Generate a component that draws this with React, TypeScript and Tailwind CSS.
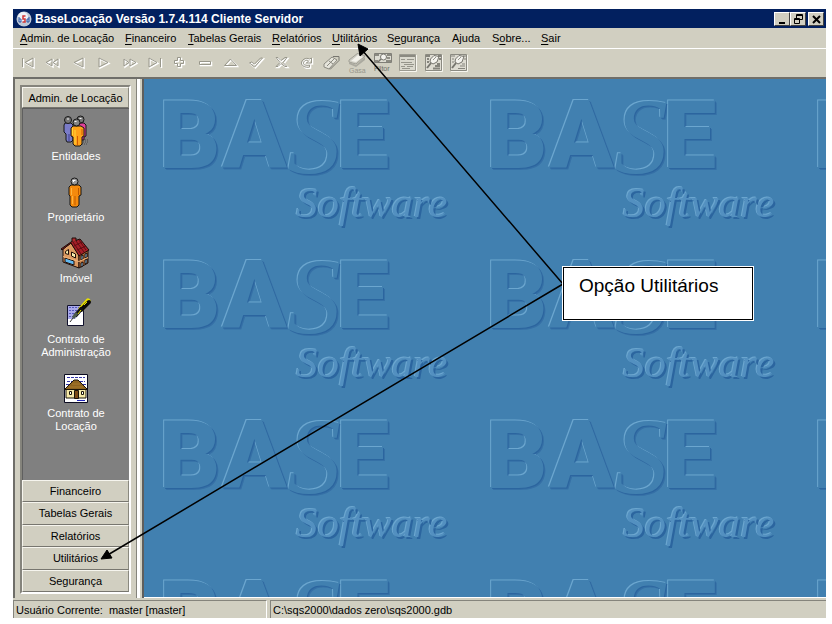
import type { ReactNode } from "react";

const menuItems = [
  { before: "", key: "A", after: "dmin. de Locação" },
  { before: "", key: "F", after: "inanceiro" },
  { before: "", key: "T", after: "abelas Gerais" },
  { before: "", key: "R", after: "elatórios" },
  { before: "", key: "U", after: "tilitários" },
  { before: "S", key: "e", after: "gurança" },
  { before: "A", key: "j", after: "uda" },
  { before: "S", key: "o", after: "bre..." },
  { before: "", key: "S", after: "air" },
];

const toolPaths = [
  { label: "Primeiro", d: "M4.5 5v9M15 5v9L7 9.5Z" },
  { label: "Retroceder", d: "M9 6v7L3 9.5ZM15 6v7L10 9.5Z" },
  { label: "Anterior", d: "M14 5v9L5 9.5Z" },
  { label: "Próximo", d: "M5 5v9L14 9.5Z" },
  { label: "Avançar", d: "M4 6v7L9 9.5ZM10 6v7L16 9.5Z" },
  { label: "Último", d: "M15.5 5v9M4 5v9L12 9.5Z" },
  { label: "Inserir", d: "M7.5 4.5h3v3h3v3h-3v3h-3v-3h-3v-3h3Z" },
  { label: "Excluir", d: "M3.5 8.5h11v3h-11Z" },
  { label: "Editar", d: "M9.5 6L15.5 12.5H3.5Z" },
  { label: "Gravar", d: "M2.5 10l2-1 3 2 6-6 2 0-8 9Z" },
  { label: "Cancelar", d: "M4 4.5h2l3 3 4-3h2l-4 5 4 4h-2l-4-3-3 3h-2l4-4Z" },
  { label: "Atualizar", d: "M14.5 5v5h-5l2-2c-2-2-5 0-5 2s3 3 6 2v2c-4 1-8-1-8-4s4-6 8-4Z" },
];

function Embossed({ d }: { d: string }) {
  return (
    <svg className="w-[18px] h-[18px]" viewBox="0 1 18 18" fill="none">
      <path d={d} stroke="#ffffff" strokeWidth="1.5" transform="translate(1 1)" />
      <path d={d} stroke="#98978b" />
    </svg>
  );
}

function TagIcon() {
  return (
    <svg className="w-[18px] h-[18px]" viewBox="0 0 18 18" fill="none" stroke="#8b8a81">
      <path d="M1 10L9 3l5 3-8 9-5-2Z" fill="#e6e5dc" />
      <path d="M4 12l7-7M6 7l4 3" />
      <path d="M10 2.5h6v4l-9 9" stroke="#77766f" />
    </svg>
  );
}

function CleanIcon() {
  return (
    <svg className="w-[18px] h-5" viewBox="0 0 18 20" fill="none">
      <path d="M1 7L10 0l7 3-9 8-7-2Z" fill="#cfcec4" stroke="#a09f95" />
      <path d="M3 8l7-6 5 2-7 5Z" fill="#f2f1ea" />
      <path d="M1 9l7 3 9-8v3l-9 7-7-3Z" fill="#aaa99f" />
      <text x="1" y="20" fontSize="7" fill="#96958b" fontFamily="Liberation Sans, sans-serif">Gasa</text>
    </svg>
  );
}

function FilterIcon() {
  return (
    <svg className="w-[18px] h-5" viewBox="0 0 18 20" fill="none">
      <path d="M.5.5h17v9H.5Z" fill="#dddcd2" stroke="#807f78" />
      <path d="M1 1h4v2H1zM13 1h4v2h-4zM1 7h3v2H1zM12 7h5v2h-5z" fill="#8b8a81" />
      <circle cx="9.5" cy="4" r="3" fill="#f4f3ee" stroke="#77766f" />
      <path d="M7 6l-3 3M13 5h3" stroke="#77766f" strokeWidth="1.5" />
      <text x="0" y="18" fontSize="7" fill="#6d6c66" fontFamily="Liberation Sans, sans-serif">Filtor</text>
    </svg>
  );
}

function ListIcon() {
  return (
    <svg className="w-[18px] h-[18px]" viewBox="0 0 18 18" fill="none">
      <path d="M.5.5h16v16H.5Z" fill="#dad9ce" stroke="#9c9b91" />
      <path d="M1 2h15" stroke="#8b8a81" strokeWidth="2" />
      <path d="M2 5.5h4M8 5.5h7M2 8.5h11M5 10.5h10M2 12.5h4M8 12.5h6M3 14.5h8" stroke="#96958b" />
      <path d="M1 17.5h16.5V1" stroke="#f7f6ef" />
    </svg>
  );
}

function SearchSheetIcon({ dark }: { dark?: boolean }) {
  return (
    <svg className="w-[18px] h-[18px]" viewBox="0 0 18 18" fill="none">
      <path d="M.5.5h16v16H.5Z" fill="#dedcd2" stroke="#8b8a81" />
      <path d="M1 2h4M13 2h3M2 5h2M2 8h2M12 10h3M10 12h5M8 14.5h7M14 5h2" stroke="#85847c" strokeWidth={dark ? 2 : 1} />
      <path d="M5.5 5L9 1.5l5 1L12 8l-4 2-3-2Z" fill="#f4f3ee" stroke="#77766f" />
      <path d="M8 6l3-3" stroke="#96958b" />
      <path d="M6 9l-4 5" stroke="#77766f" strokeWidth="2" />
      <path d="M1 17.5h16.5V1" stroke="#f7f6ef" />
    </svg>
  );
}

function PeopleIcon() {
  return (
    <svg className="w-8 h-8" viewBox="0 0 32 32" stroke="#161616">
      <path d="M23 27h6M22 29h5M25 25h3" stroke="#4a4a4a" strokeDasharray="1 1" />
      <path d="M18 9l2-1h4l2 2v11l-2 1v3h-5Z" fill="#e0409a" />
      <path d="M5 8h6l2 2v15l-2 2H7l-1-2v-6l-2-2v-7Z" fill="#7a7cc8" />
      <path d="M9 19v7" stroke="#3c3f8a" />
      <circle cx="8" cy="5" r="3.5" fill="#777" />
      <circle cx="20.5" cy="4.5" r="3.5" fill="#777" />
      <path d="M13 11h8l3 2v8l-2 1v7l-2 2h-5l-2-2v-7l-2-1v-8Z" fill="#ffa21a" />
      <path d="M12.5 13v7M15 15v14" stroke="#ffd839" />
      <path d="M17.5 21v9M22 14v6" stroke="#d45b00" />
      <circle cx="16.5" cy="7.5" r="3.5" fill="#858585" />
      <path d="M14.5 6.5h2M7 4h2M19.5 3.5h2" stroke="#f4f4f4" />
    </svg>
  );
}

function OwnerIcon() {
  return (
    <svg className="w-8 h-8" viewBox="0 0 32 32" stroke="#161616">
      <path d="M11 9h8l2 2v8l-2 1v9l-2 2h-5l-2-2v-9l-1-1v-8Z" fill="#f58a0c" />
      <path d="M11.5 12v7M12.5 20v8" stroke="#ffb43c" />
      <path d="M15 20v9M18.5 12v7" stroke="#bf5a00" />
      <circle cx="14.5" cy="5.5" r="3.5" fill="#9a9a9a" />
      <path d="M12.5 4.5h3M13 5.5h1" stroke="#fff" />
    </svg>
  );
}

function HouseIcon() {
  return (
    <svg className="w-8 h-8" viewBox="0 0 32 32" stroke="#1c0d08">
      <path d="M3 12l8-6 8 12v13L3 25Z" fill="#dc9a62" />
      <path d="M19 18l9-5v13l-9 5Z" fill="#b87440" />
      <path d="M11 5l9-3 9 11-10 6-8-13-9 7-1-1Z" fill="#a51f28" />
      <path d="M13 5l8 12M16 4l8 11M19 3l7 10M14 9l8-4M17 13l9-4" stroke="#5f0d13" />
      <path d="M12 5V1h4v3" fill="#b12c30" />
      <path d="M5.5 14.5l3-2v5l-3-1ZM11.5 15l4 2v4l-4-2Z" fill="#f8eeb0" />
      <path d="M5 21l9 3v4l-9-3Z" fill="#62b8ef" />
      <path d="M21 19l2-1v4l-2 1ZM25 17l2-1v4l-2 1ZM21 26l2-1v4l-2 1ZM25 23l2-1v4l-2 1Z" fill="#8cc7ec" />
      <path d="M3 19.5l16 5 9-4" fill="none" stroke="#f0b479" />
    </svg>
  );
}

function PenContractIcon() {
  return (
    <svg className="w-8 h-8" viewBox="0 0 32 32" fill="none">
      <path d="M7.5 7.5h16v20h-16Z" fill="#fff" stroke="#10102c" />
      <path d="M8 8h15v4l-8 9H8z" fill="#a9a9e8" />
      <path d="M9 9.5h13M9 12.5h10M9 15.5h8M9 18.5h5" stroke="#5557b9" strokeDasharray="2 1" />
      <path d="M28 3l-7 8" stroke="#e8e000" strokeWidth="5" strokeLinecap="round" />
      <path d="M29 4l-8 8" stroke="#080808" strokeWidth="4" strokeLinecap="round" />
      <path d="M22 10l-7 8" stroke="#111" strokeWidth="4" />
      <path d="M17 15l-4 5" stroke="#4d5b4d" strokeWidth="3" />
      <path d="M27 4l-3 3M18 16l3-4" stroke="#e8e000" />
      <path d="M13 20l-3 4" stroke="#333" />
    </svg>
  );
}

function HouseContractIcon() {
  return (
    <svg className="w-8 h-8" viewBox="0 0 32 32" fill="none">
      <path d="M4.5 2.5h23v28h-23Z" fill="#fff" stroke="#0b0b20" />
      <path d="M7 5.5h18M7 9.5h5M20 9.5h5M6 12.5h3M23 12.5h3" stroke="#3437a8" strokeDasharray="3 1" />
      <path d="M6 16h20v10H6Z" fill="#f5e9a8" stroke="#1a1408" />
      <path d="M4.5 17.5L14 8h4l9.5 9.5Z" fill="#8e6420" stroke="#1a1408" />
      <path d="M9 15h14M12 12h8" stroke="#a87a2b" />
      <path d="M14.5 18.5h4v8h-4Z" fill="#7b4a15" stroke="#1a1408" />
      <path d="M9.5 19.5h2v3h-2ZM21.5 19.5h2v3h-2Z" fill="#fff" stroke="#1a1408" />
      <path d="M17 28.5h8" stroke="#2024b8" />
    </svg>
  );
}

const shortcuts: { label: string; icon: ReactNode }[] = [
  { label: "Entidades", icon: <PeopleIcon /> },
  { label: "Proprietário", icon: <OwnerIcon /> },
  { label: "Imóvel", icon: <HouseIcon /> },
  { label: "Contrato de Administração", icon: <PenContractIcon /> },
  { label: "Contrato de Locação", icon: <HouseContractIcon /> },
];

const groups = ["Financeiro", "Tabelas Gerais", "Relatórios", "Utilitários", "Segurança"];

function Initials() {
  return (
    <>
      <g fontFamily="Roboto, sans-serif" fontWeight="900" fontSize="95">
        <text x="15" y="89">B</text>
        <text x="78" y="89">A</text>
        <text x="192" y="89">E</text>
      </g>
      <text x="143" y="94" fontFamily="Liberation Serif, serif" fontStyle="italic" fontSize="108">S</text>
    </>
  );
}

function Signature() {
  return (
    <text x="152" y="138" fontFamily="Liberation Serif, serif" fontStyle="italic" fontSize="43">
      Software
    </text>
  );
}

/* Tiled wallpaper: a light and a dark copy around the face give the relief */
function Wallpaper() {
  return (
    <svg className="absolute inset-0 w-full h-full" aria-hidden="true">
      <defs>
        <pattern id="logo-tile" width="327" height="160" patternUnits="userSpaceOnUse">
          <g fill="#3570a6" transform="translate(2 2)"><Initials /></g>
          <g fill="#6ba6cf" transform="translate(-1 -1)"><Initials /><Signature /></g>
          <g fill="#2b659f" transform="translate(1 1)"><Initials /></g>
          <g fill="#2b659f" transform="translate(2 2)"><Signature /></g>
          <g fill="#4180b0"><Initials /></g>
          <g fill="#5390c0"><Signature /></g>
        </pattern>
      </defs>
      <rect width="100%" height="100%" fill="url(#logo-tile)" />
    </svg>
  );
}

function TitleBar() {
  const button =
    "w-4 h-[14px] flex items-center justify-center bg-[#d1cfc1] border border-t-white border-l-white border-r-[#404040] border-b-[#404040]";
  return (
    <header className="h-[19px] shrink-0 flex items-center bg-[#02205f] pl-[3px] pr-[2px]">
      <svg className="w-4 h-4" viewBox="0 0 16 16">
        <circle cx="8" cy="8" r="7.5" fill="#bfc9d8" />
        <circle cx="7" cy="6" r="5" fill="#eef2f8" />
        <path d="M3 6v5M3 8h2v3H3M13 6v5h-2V8h2" stroke="#2b59a8" fill="none" />
        <path d="M9.5 5H7v3h2v3H6.5" stroke="#d23434" fill="none" strokeWidth="1.5" />
      </svg>
      <h1 className="flex-1 pl-[3px] text-[12px] leading-4 font-bold text-white whitespace-nowrap">
        BaseLocação Versão 1.7.4.114 Cliente Servidor
      </h1>
      <div className="flex">
        <button className={button} aria-label="Minimizar">
          <svg className="w-3 h-3 shrink-0" viewBox="0 0 12 12"><path d="M3 9h6v2H3z" /></svg>
        </button>
        <button className={button} aria-label="Restaurar">
          <svg className="w-3 h-3 shrink-0" viewBox="0 0 12 12" fill="none" stroke="#000">
            <path d="M4.5 5V1.5h6v5H8M4 2.5h7M2.5 5.5h5v5h-5ZM2 6.5h6" />
          </svg>
        </button>
        <button className={`${button} ml-[2px]`} aria-label="Fechar">
          <svg className="w-3 h-3 shrink-0" viewBox="0 0 12 12"><path d="M3 3l7 7M10 3l-7 7" stroke="#000" strokeWidth="2" /></svg>
        </button>
      </div>
    </header>
  );
}

function Sidebar() {
  const tab =
    "w-full text-center bg-[#d1cfc1] border border-t-[#f6f5ee] border-l-[#f6f5ee] border-r-[#8a897f] border-b-[#77766f]";
  return (
    <aside className="w-[124px] shrink-0 flex flex-col border-l-2 border-l-[#6f6e69] border-r border-r-[#85847c] bg-[#d1cfc1] pt-[6px] pb-1 px-[5px]">
      <div className="flex-1 min-h-0 flex flex-col border-2 border-t-[#85847c] border-l-[#85847c] border-r-white border-b-white">
        <button className={`${tab} h-[21px] shrink-0 leading-[18px]`}>Admin. de Locação</button>
        <nav className="flex-1 min-h-0 flex flex-col bg-[#808080] pt-[6px] border-t border-l border-[#5f5f5f]">
          {shortcuts.map((item) => (
            <button key={item.label} className="flex flex-col items-center gap-[3px] pb-[13px] text-white leading-[13px]">
              {item.icon}
              <span className="w-20">{item.label}</span>
            </button>
          ))}
        </nav>
        <div className="h-28 shrink-0 grid grid-rows-5">
          {groups.map((group) => (
            <button key={group} className={tab}>{group}</button>
          ))}
        </div>
      </div>
    </aside>
  );
}

function Callout() {
  return (
    <>
      <svg className="absolute left-0 top-0 w-[832px] h-[624px] pointer-events-none" viewBox="0 0 832 624">
        <path d="M563 284L362 50M563 284L106 556" stroke="#000" strokeWidth="1.5" fill="none" />
        <path d="M358 44l10 5-8 7ZM101 559l6-9 5 8Z" fill="#000" stroke="#000" />
      </svg>
      <div className="absolute left-[563px] top-[267px] w-[190px] h-[53px] bg-white border border-black outline outline-white pl-[15px] pt-[6px] text-[19px] leading-6 whitespace-nowrap">
        Opção Utilitários
      </div>
    </>
  );
}

export default function App() {
  return (
    <div className="relative h-screen min-h-[560px] bg-white pt-[9px] pr-[6px] pb-[6px] pl-[13px] font-['Liberation_Sans',Arial,sans-serif] text-[11px] text-black overflow-hidden">
      <div className="h-full flex flex-col bg-[#d1cfc1]">
        <TitleBar />

        {/* Menu */}
        <nav className="h-5 shrink-0 grid grid-cols-[105px_63px_84px_60px_55px_65px_40px_49px_40px] items-center pl-[7px]">
          {menuItems.map((item) => (
            <button key={item.before + item.key + item.after} className="text-left whitespace-nowrap">
              {item.before}
              <span className="underline underline-offset-2">{item.key}</span>
              {item.after}
            </button>
          ))}
        </nav>

        {/* Toolbar */}
        <div className="h-[31px] shrink-0 border-t border-t-white border-b-2 border-b-[#6f6e69] pl-[5px] flex items-center">
          <div className="w-[450px] flex items-center justify-between">
            {toolPaths.map((tool) => (
              <button key={tool.label} aria-label={tool.label}><Embossed d={tool.d} /></button>
            ))}
            <button aria-label="Etiquetas"><TagIcon /></button>
            <button aria-label="Limpar"><CleanIcon /></button>
            <button aria-label="Filtrar"><FilterIcon /></button>
            <button aria-label="Lista"><ListIcon /></button>
            <button aria-label="Pesquisar"><SearchSheetIcon dark /></button>
            <button aria-label="Localizar"><SearchSheetIcon /></button>
          </div>
        </div>

        <div className="flex-1 min-h-0 flex">
          <Sidebar />
          <div className="w-[7px] shrink-0 bg-[#d1cfc1] border-l-3 border-l-white border-r-2 border-r-[#5f5f5c]" />
          <main className="relative flex-1 bg-[#4180b0] border-b border-b-white overflow-hidden">
            <Wallpaper />
          </main>
        </div>

        {/* Status bar */}
        <footer className="h-5 shrink-0 flex gap-[3px] pt-[2px] leading-[18px] whitespace-pre">
          <div className="w-[254px] border-t border-l border-t-[#85847c] border-l-[#85847c] border-r border-r-white pl-[2px]">
            {"Usuário Corrente:  master [master]"}
          </div>
          <div className="flex-1 border-t border-l border-t-[#85847c] border-l-[#85847c] pl-[2px]">
            C:\sqs2000\dados zero\sqs2000.gdb
          </div>
        </footer>
      </div>
      <Callout />
    </div>
  );
}
